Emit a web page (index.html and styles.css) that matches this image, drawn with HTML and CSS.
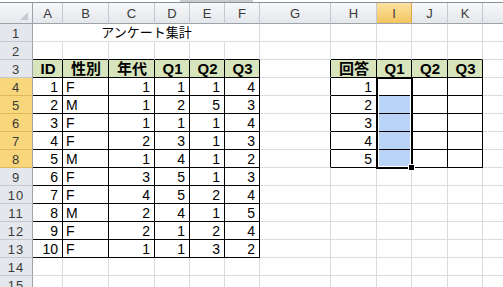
FILE: index.html
```html
<!DOCTYPE html>
<html lang="ja">
<head>
    <meta charset="UTF-8">
    <title>アンケート集計</title>
    <link rel="stylesheet" href="styles.css">
</head>
<body>
    <div class="topbar"><div class="tab"></div></div>
    <div class="sheet">
        <!-- column headers -->
        <div class="corner"><span class="tri"></span></div>
        <div class="ch">A</div><div class="ch">B</div><div class="ch">C</div><div class="ch">D</div>
        <div class="ch">E</div><div class="ch">F</div><div class="ch">G</div><div class="ch">H</div>
        <div class="ch ch-hl">I</div><div class="ch">J</div><div class="ch">K</div><div class="ch"></div>

        <!-- 1 -->
        <div class="rh">1</div>
        <div class="c title">アンケート集計</div>
        <div class="c"></div><div class="c"></div><div class="c"></div><div class="c"></div><div class="c"></div><div class="c"></div>

        <!-- 2 -->
        <div class="rh">2</div>
        <div class="c bt"></div><div class="c bt"></div><div class="c bt"></div><div class="c bt"></div><div class="c bt"></div><div class="c bt"></div>
        <div class="c"></div>
        <div class="c bt"></div><div class="c bt"></div><div class="c bt"></div><div class="c bt"></div>
        <div class="c"></div>

        <!-- 3 -->
        <div class="rh">3</div>
        <div class="c b th">ID</div><div class="c b th">性別</div><div class="c b th">年代</div>
        <div class="c b th">Q1</div><div class="c b th">Q2</div><div class="c b th">Q3</div>
        <div class="c br"></div>
        <div class="c b th">回答</div><div class="c b th">Q1</div><div class="c b th">Q2</div><div class="c b th">Q3</div>
        <div class="c"></div>

        <!-- 4 -->
        <div class="rh rh-hl">4</div>
        <div class="c b n">1</div><div class="c b">F</div><div class="c b n">1</div><div class="c b n">1</div><div class="c b n">1</div><div class="c b n">4</div>
        <div class="c br"></div>
        <div class="c b n">1</div><div class="c b"></div><div class="c b"></div><div class="c b"></div>
        <div class="c"></div>

        <!-- 5 -->
        <div class="rh rh-hl">5</div>
        <div class="c b n">2</div><div class="c b">M</div><div class="c b n">1</div><div class="c b n">2</div><div class="c b n">5</div><div class="c b n">3</div>
        <div class="c br"></div>
        <div class="c b n">2</div><div class="c b sel"></div><div class="c b"></div><div class="c b"></div>
        <div class="c"></div>

        <!-- 6 -->
        <div class="rh rh-hl">6</div>
        <div class="c b n">3</div><div class="c b">F</div><div class="c b n">1</div><div class="c b n">1</div><div class="c b n">1</div><div class="c b n">4</div>
        <div class="c br"></div>
        <div class="c b n">3</div><div class="c b sel"></div><div class="c b"></div><div class="c b"></div>
        <div class="c"></div>

        <!-- 7 -->
        <div class="rh rh-hl">7</div>
        <div class="c b n">4</div><div class="c b">F</div><div class="c b n">2</div><div class="c b n">3</div><div class="c b n">1</div><div class="c b n">3</div>
        <div class="c br"></div>
        <div class="c b n">4</div><div class="c b sel"></div><div class="c b"></div><div class="c b"></div>
        <div class="c"></div>

        <!-- 8 -->
        <div class="rh rh-hl">8</div>
        <div class="c b n">5</div><div class="c b">M</div><div class="c b n">1</div><div class="c b n">4</div><div class="c b n">1</div><div class="c b n">2</div>
        <div class="c br"></div>
        <div class="c b n">5</div><div class="c b sel"></div><div class="c b"></div><div class="c b"></div>
        <div class="c"></div>

        <!-- 9 -->
        <div class="rh">9</div>
        <div class="c b n">6</div><div class="c b">F</div><div class="c b n">3</div><div class="c b n">5</div><div class="c b n">1</div><div class="c b n">3</div>
        <div class="c"></div><div class="c"></div><div class="c"></div><div class="c"></div><div class="c"></div><div class="c"></div>

        <!-- 10 -->
        <div class="rh">10</div>
        <div class="c b n">7</div><div class="c b">F</div><div class="c b n">4</div><div class="c b n">5</div><div class="c b n">2</div><div class="c b n">4</div>
        <div class="c"></div><div class="c"></div><div class="c"></div><div class="c"></div><div class="c"></div><div class="c"></div>

        <!-- 11 -->
        <div class="rh">11</div>
        <div class="c b n">8</div><div class="c b">M</div><div class="c b n">2</div><div class="c b n">4</div><div class="c b n">1</div><div class="c b n">5</div>
        <div class="c"></div><div class="c"></div><div class="c"></div><div class="c"></div><div class="c"></div><div class="c"></div>

        <!-- 12 -->
        <div class="rh">12</div>
        <div class="c b n">9</div><div class="c b">F</div><div class="c b n">2</div><div class="c b n">1</div><div class="c b n">2</div><div class="c b n">4</div>
        <div class="c"></div><div class="c"></div><div class="c"></div><div class="c"></div><div class="c"></div><div class="c"></div>

        <!-- 13 -->
        <div class="rh">13</div>
        <div class="c b n">10</div><div class="c b">F</div><div class="c b n">1</div><div class="c b n">1</div><div class="c b n">3</div><div class="c b n">2</div>
        <div class="c"></div><div class="c"></div><div class="c"></div><div class="c"></div><div class="c"></div><div class="c"></div>

        <!-- 14 -->
        <div class="rh">14</div>
        <div class="c"></div><div class="c"></div><div class="c"></div><div class="c"></div><div class="c"></div><div class="c"></div>
        <div class="c"></div><div class="c"></div><div class="c"></div><div class="c"></div><div class="c"></div><div class="c"></div>

        <!-- 15 -->
        <div class="rh">15</div>
        <div class="c"></div><div class="c"></div><div class="c"></div><div class="c"></div><div class="c"></div><div class="c"></div>
        <div class="c"></div><div class="c"></div><div class="c"></div><div class="c"></div><div class="c"></div><div class="c"></div>

        <!-- selection I4:I8 -->
        <div class="selection"><span class="handle"></span></div>
    </div>
</body>
</html>
```

FILE: styles.css
```css
body {
    margin: 0;
    background: #ffffff;
    font-family: 'Liberation Sans', 'Noto Sans CJK JP', sans-serif;
    font-size: 14px;
    color: #000;
    overflow: hidden;
}
.topbar {
    height: 2px;
    border-bottom: 1px solid #8c8f94;
    display: flex;
}
.tab {
    margin-left: 180px;
    width: 73px;
    height: 2px;
    background: #c9ccd1;
}
.sheet {
    position: relative;
    display: grid;
    grid-template-columns: 33px 30px 46px 46px 35px 35px 35px 71px 46px 35px 36px 35px 40px;
    grid-template-rows: 21px;
    grid-auto-rows: 18px;
}
.sheet > div {
    box-sizing: border-box;
}
.corner {
    background: linear-gradient(#f6f7f9, #e6e9ed);
    border-right: 1px solid #9ea3aa;
    border-bottom: 1px solid #9ea3aa;
    display: flex;
    align-items: flex-end;
    justify-content: flex-end;
    padding: 0 4px 3px 0;
}
.tri {
    width: 0;
    height: 0;
    border-left: 8px solid transparent;
    border-bottom: 8px solid #c8ccd2;
}
.ch {
    background: linear-gradient(#f7f8fa, #e4e7eb);
    border-right: 1px solid #c5c9cf;
    border-bottom: 1px solid #9ea3aa;
    color: #3a3a3a;
    font-size: 13px;
    display: flex;
    align-items: center;
    justify-content: center;
    padding-top: 1px;
}
.ch-hl {
    background: linear-gradient(#fbe3a2, #f3c55f);
    border-right-color: #d9a94a;
}
.rh {
    background: #e4e8ed;
    border-right: 1px solid #9ea3aa;
    border-bottom: 1px solid #c5c9cf;
    color: #3a3a3a;
    font-size: 13px;
    letter-spacing: 1px;
    display: flex;
    align-items: center;
    justify-content: center;
    padding-top: 1px;
}
.rh-hl {
    background: #f8d67c;
    border-bottom-color: #e0b85a;
}
.c {
    border-right: 1px solid #dadcdd;
    border-bottom: 1px solid #dadcdd;
    display: flex;
    align-items: flex-end;
    padding: 0 2px 0 3px;
    line-height: 16px;
    white-space: nowrap;
}
.title {
    grid-column: span 6;
    justify-content: center;
    font-size: 13px;
}
.b {
    border-right-color: #000;
    border-bottom-color: #000;
}
.bt {
    border-bottom-color: #000;
}
.br {
    border-right-color: #000;
}
.n {
    justify-content: flex-end;
    padding-right: 4px;
}
.th {
    background: #d7e4bc;
    font-weight: bold;
    justify-content: center;
    font-size: 15px;
}
.sel {
    background: #b9d4f7;
}
.selection {
    position: absolute;
    left: 376px;
    top: 74px;
    width: 37px;
    height: 92px;
    box-sizing: border-box;
    border: 2px solid #000;
    box-shadow: inset 0 0 0 1px #fff;
}
.handle {
    position: absolute;
    right: -4px;
    bottom: -4px;
    width: 5px;
    height: 5px;
    background: #000;
    border: 1px solid #fff;
}
```
